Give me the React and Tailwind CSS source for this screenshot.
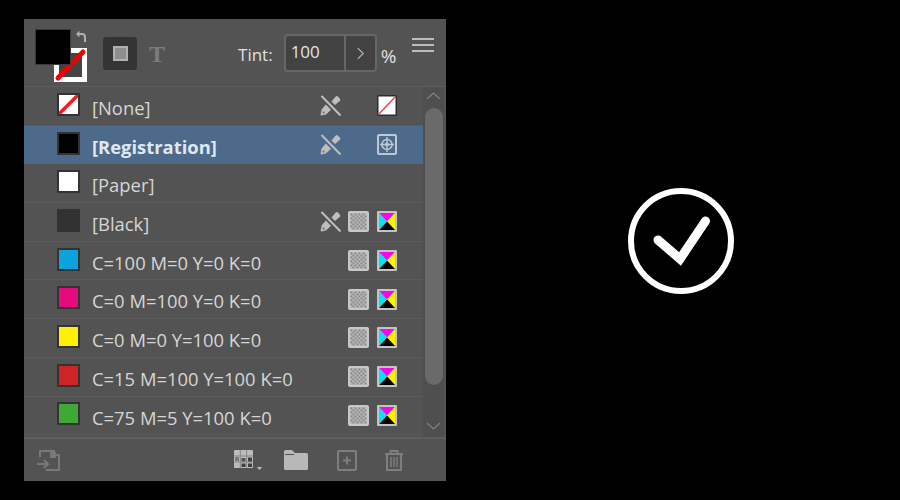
const rows = [
  { name: "[None]", kind: "none", pencil: true, right: "none" },
  { name: "[Registration]", kind: "black", pencil: true, right: "reg", selected: true },
  { name: "[Paper]", color: "#ffffff" },
  { name: "[Black]", color: "#323232", pencil: true, grid: true, right: "cmyk" },
  { name: "C=100 M=0 Y=0 K=0", color: "#0aa3dc", grid: true, right: "cmyk" },
  { name: "C=0 M=100 Y=0 K=0", color: "#e50a7e", grid: true, right: "cmyk" },
  { name: "C=0 M=0 Y=100 K=0", color: "#fdf000", grid: true, right: "cmyk" },
  { name: "C=15 M=100 Y=100 K=0", color: "#d02328", grid: true, right: "cmyk" },
  { name: "C=75 M=5 Y=100 K=0", color: "#3fa935", grid: true, right: "cmyk" },
];

function Swatch({ row }) {
  const fill = row.kind === "black" ? "#000000" : row.color;
  return (
    <div className="w-[23px] h-[23px] -mt-[3px] border-2 border-[#333333] shrink-0" style={{ background: fill || "#fff" }}>
      {row.kind === "none" && (
        <svg viewBox="0 0 19 19" className="w-[19px] h-[19px] block">
          <rect width="19" height="19" fill="#fff" />
          <path d="M0 19L19 0" stroke="#ee1c25" strokeWidth="3.4" />
        </svg>
      )}
    </div>
  );
}

function Pencil({ color = "#bebebe" }) {
  return (
    <svg viewBox="0 0 21 21" className="w-[21px] h-[21px] block">
      <path d="M11.5 6.5L15.5 1.8a1.8 1.8 0 0 1 2.6 0l1.6 1.6a1.8 1.8 0 0 1 0 2.6L15 10z" fill={color} />
      <path d="M5.8 9.5L11 14.8L6 19.5L1.5 20.5A1 1 0 0 1 0.6 19.5L1.6 14.5z" fill={color} />
      <circle cx="3.6" cy="17.6" r="1.1" fill="#535353" opacity="0.7" />
      <path d="M1.5 1L20.5 20.5" stroke={color} strokeWidth="2" />
    </svg>
  );
}

function GridIcon() {
  const dots = [];
  for (let y = 0; y < 8; y++) {
    for (let x = 0; x < 8; x++) {
      if ((x + y) % 2 === 0) dots.push(<rect key={x + "-" + y} x={2.5 + x * 2} y={2.5 + y * 2} width="1.8" height="1.8" fill="#858585" />);
    }
  }
  return (
    <svg viewBox="0 0 21 21" className="w-[21px] h-[21px] block">
      <rect width="21" height="21" rx="2" fill="#c8c8c8" />
      <rect x="2" y="2" width="17" height="17" fill="#b8b8b8" />
      {dots}
    </svg>
  );
}

function CmykIcon() {
  return (
    <svg viewBox="0 0 20 21" className="w-[20px] h-[21px] block">
      <rect width="20" height="21" rx="1" fill="#c4c4c4" />
      <path d="M2 2H18L10 10.5z" fill="#ff00f0" />
      <path d="M18 2V19L10 10.5z" fill="#fff200" />
      <path d="M2 19H18L10 10.5z" fill="#000" />
      <path d="M2 2V19L10 10.5z" fill="#00e5f5" />
    </svg>
  );
}

function NoneSmall() {
  return (
    <svg viewBox="0 0 20 21" className="w-[20px] h-[21px] block">
      <rect width="20" height="21" rx="1.5" fill="#2b2b2b" />
      <rect x="1.5" y="1.5" width="17" height="18" fill="#fff" />
      <path d="M2 19L18 2" stroke="#ee3a3f" strokeWidth="1.3" />
    </svg>
  );
}

function RegIcon() {
  const c = "#bcc8d4";
  return (
    <svg viewBox="0 0 20 21" className="w-[20px] h-[21px] block" fill="none" stroke={c}>
      <rect x="1" y="1" width="18" height="19" rx="1" strokeWidth="2" />
      <circle cx="10" cy="10.5" r="5" strokeWidth="1.6" />
      <path d="M10 3V18M3 10.5H17" strokeWidth="1.4" />
      <circle cx="10" cy="10.5" r="1.9" fill={c} stroke="none" />
    </svg>
  );
}

function Row({ row }) {
  return (
    <div className={"h-[38.7px] flex items-center pl-[33px] border-b " + (row.selected ? "bg-[#4d6a8a] border-[#4d6a8a]" : "border-[#5b5b5b]")}>
      <Swatch row={row} />
      <span className={"ml-[12px] mt-[4px] text-[18.4px] whitespace-nowrap " + (row.selected ? "font-bold text-[#dfe8f2]" : "text-[#d6d6d6]")}>{row.name}</span>
      <div className="ml-auto flex items-center pr-[26px]">
        {row.pencil && <div className={row.grid ? "mr-[7px]" : "mr-[36px]"}><Pencil /></div>}
        {row.grid && <div className="mr-[8px]"><GridIcon /></div>}
        {row.right === "none" && <NoneSmall />}
        {row.right === "reg" && <RegIcon />}
        {row.right === "cmyk" && <CmykIcon />}
      </div>
    </div>
  );
}

export default function App() {
  return (
    <div className="w-[900px] h-[500px] bg-black pt-[19px] pl-[24px] overflow-hidden" style={{ fontFamily: '"Open Sans", "Noto Sans", sans-serif' }}>
      <div className="w-[422px] h-[462px] bg-[#535353] flex flex-col">
        {/* Header */}
        <div className="h-[68px] flex items-start border-b border-[#5e5e5e] shrink-0">
          <div className="relative w-[79px] h-full shrink-0">
            <svg viewBox="0 0 33 34" className="absolute left-[30px] top-[29px] w-[33px] h-[34px] block">
              <rect x="2.5" y="2.5" width="28" height="29" fill="#444444" stroke="#ffffff" strokeWidth="5" />
              <path d="M4 30L29 4" stroke="#f00000" strokeWidth="5" strokeLinecap="round" />
            </svg>
            <div className="absolute left-[11px] top-[10px] w-[36px] h-[36px] bg-black border border-[#3a3a3a]" />
            <svg viewBox="0 0 12 12" className="absolute left-[51px] top-[12px] w-[12px] h-[12px]" fill="none" stroke="#b0b0b0" strokeWidth="2">
              <path d="M2 3H7Q10 3 10 6V11" />
              <path d="M4.5 0.5L2 3L4.5 5.5" strokeWidth="1.4" />
            </svg>
          </div>
          <div className="w-[34px] h-[33px] mt-[18px] bg-[#343434] rounded-[3px] flex items-center justify-center shrink-0">
            <div className="w-[15px] h-[15px] bg-[#8e8e8e] border-2 border-[#b0b0b0]" />
          </div>
          <span className="mt-[21px] ml-[12px] text-[24px] leading-[28px] font-bold text-[#7c7c7c]" style={{ fontFamily: '"Liberation Serif", serif' }}>T</span>
          <span className="mt-[24px] ml-[73px] text-[17px] leading-[24px] text-[#e0e0e0]">Tint:</span>
          <div className="mt-[15px] ml-[11px] w-[93px] h-[38px] border-2 border-[#666666] rounded-[4px] bg-[#424242] flex shrink-0">
            <span className="flex-1 pl-[5px] text-[17px] leading-[32px] text-[#e4e4e4]">100</span>
            <div className="w-[31px] border-l-2 border-[#666666] flex items-center justify-center">
              <svg viewBox="0 0 10 14" className="w-[9px] h-[13px]" fill="none" stroke="#b4b4b4" strokeWidth="1.3"><path d="M2 1L8 7L2 13" /></svg>
            </div>
          </div>
          <span className="mt-[25px] ml-[4px] text-[19px] leading-[24px] text-[#e0e0e0]">%</span>
          <div className="mt-[19px] ml-[16px] w-[22px] flex flex-col gap-[4px]">
            <div className="h-[2px] bg-[#bcbcbc]" />
            <div className="h-[2px] bg-[#bcbcbc]" />
            <div className="h-[2px] bg-[#bcbcbc]" />
          </div>
        </div>
        {/* List */}
        <div className="h-[350px] flex shrink-0">
          <div className="w-[399px] shrink-0">
            {rows.map((r) => <Row key={r.name} row={r} />)}
          </div>
          <div className="w-[21px] bg-[#4f4f4f] flex flex-col items-center shrink-0">
            <svg viewBox="0 0 16 8" className="w-[15px] h-[8px] mt-[5px]" fill="none" stroke="#8c8c8c" strokeWidth="1.2"><path d="M1 7L8 1L15 7" /></svg>
            <div className="w-[18px] h-[277px] mt-[8px] rounded-[9px] bg-[#6a6a6a]" />
            <svg viewBox="0 0 16 8" className="w-[15px] h-[8px] mt-auto mb-[7px]" fill="none" stroke="#8c8c8c" strokeWidth="1.2"><path d="M1 1L8 7L15 1" /></svg>
          </div>
        </div>
        {/* Footer */}
        <div className="flex-1 border-t-2 border-[#5e5e5e] flex items-start pt-[11px] pl-[13px]">
          <svg viewBox="0 0 24 21" className="w-[24px] h-[21px]" fill="none" stroke="#787878" strokeWidth="2">
            <path d="M3 7V1H17V5H22V20H9" />
            <path d="M0 14H11M7 10L11 14L7 18" />
            <rect x="13" y="2" width="6" height="6" fill="#787878" stroke="none" />
          </svg>
          <svg viewBox="0 0 28 20" className="w-[28px] h-[20px] ml-[173px]">
            <rect x="0" y="0" width="19" height="18" rx="1" fill="#bcbcbc" />
            <path d="M0 6H19M0 12H19M6.3 0V18M12.6 0V18" stroke="#7a7a7a" strokeWidth="0.8" />
            <rect x="1" y="7" width="4" height="4" fill="#7a7a7a" />
            <rect x="7.5" y="8" width="4" height="3.5" fill="#535353" />
            <rect x="14" y="7.5" width="4" height="4" fill="#3f3f3f" />
            <rect x="7.5" y="13.5" width="4" height="3.5" fill="#3f3f3f" />
            <rect x="14" y="13.5" width="4" height="3.5" fill="#3f3f3f" />
            <path d="M23 17H28L25.5 20z" fill="#c2c2c2" />
          </svg>
          <svg viewBox="0 0 24 20" className="w-[24px] h-[20px] ml-[22px]">
            <path d="M0 1.5Q0 0 1.5 0H8L11 3H22.5Q24 3 24 4.5V18.5Q24 20 22.5 20H1.5Q0 20 0 18.5z" fill="#b8b8b8" />
            <path d="M1 4.5H10" stroke="#535353" strokeWidth="1" />
          </svg>
          <svg viewBox="0 0 20 21" className="w-[20px] h-[21px] ml-[29px]" fill="none" stroke="#7e7e7e" strokeWidth="2">
            <rect x="1" y="1" width="18" height="19" rx="1" />
            <path d="M10 6.5V14.5M6 10.5H14" />
          </svg>
          <svg viewBox="0 0 18 21" className="w-[18px] h-[21px] ml-[28px]" fill="none" stroke="#7e7e7e" strokeWidth="2">
            <path d="M0 4H18M5.5 4V1H12.5V4" />
            <path d="M2 4V20H16V4" />
            <path d="M6 7V17M9 7V17M12 7V17" strokeWidth="1.5" />
          </svg>
        </div>
      </div>
      {/* Check badge */}
      <svg viewBox="0 0 106 106" className="absolute left-[628px] top-[188px] w-[106px] h-[106px]" fill="none" stroke="#fff">
        <circle cx="53" cy="53" r="50" strokeWidth="6" />
        <path d="M30 52L52 71L77.5 33" strokeWidth="9" strokeLinecap="round" />
      </svg>
    </div>
  );
}
